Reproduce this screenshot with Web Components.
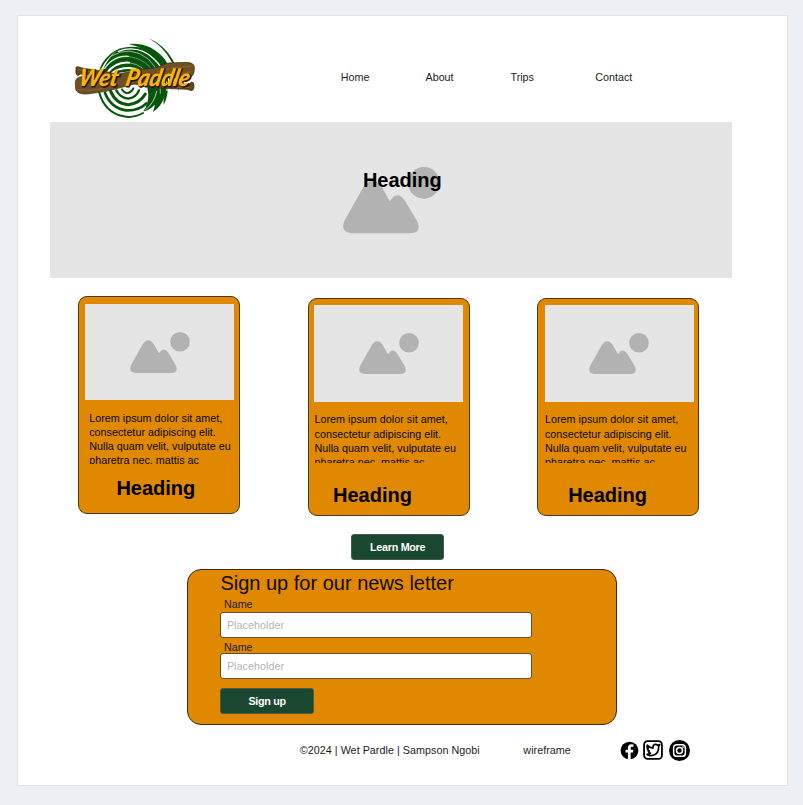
<!DOCTYPE html>
<html lang="en">
<head>
<meta charset="utf-8">
<title>Wet Paddle</title>
<style>
html,body{margin:0;padding:0}
body{background:#ecf0f5;font:10.75px/14px "Liberation Sans",Arial,sans-serif;color:#1c1c1c;height:805px;overflow:hidden}
</style>
</head>
<body>
<wp-page></wp-page>
<script>
const define = (name, markup) => {
  const t = document.createElement('template');
  t.innerHTML = markup;
  customElements.define(name, class extends HTMLElement {
    constructor() {
      super();
      this.attachShadow({mode: 'open'}).appendChild(t.content.cloneNode(true));
    }
  });
};

// crescent-shaped ripple: two arcs of different radius sharing their end points
const ripple = (x1, y1, x2, y2, r1, r2) =>
  `<path d="M${x1} ${y1}A${r1} ${r1} 0 0 1 ${x2} ${y2}A${r2} ${r2} 0 0 0 ${x1} ${y1}Z"/>`;

define('wp-logo', `
<style>:host{display:block;width:140px;height:90px}svg{display:block}</style>
<svg width="140" height="90" viewBox="0 0 420 270" role="img">
 <path fill="#07550b" d="M163 57Q215 40 258 68Q302 99 309 150Q311 200 296 225Q294 213 298 203Q286 232 264 246L270 224Q249 243 235 244Q250 221 250 194L240 118L150 130Q121 132 106 150Q114 94 163 57Z"/>
 <g fill="#07550b">
  ${ripple(250, 24, 340, 189, 150, 176)}
  ${ripple(191, 42, 321, 180, 118, 165)}
  ${ripple(98, 142, 176, 52, 105, 150)}
 </g>
 <g fill="none" stroke="#fff" stroke-linecap="round">
  <path stroke-width="4" d="M160 64Q220 42 267 87Q306 124 306 181"/>
  <path stroke-width="3" opacity=".55" d="M140 78Q195 44 250 87Q291 126 286 190"/>
  <path stroke-width="4" opacity=".85" d="M110 131Q137 76 190 79"/>
  <path stroke-width="3" opacity=".35" d="M190 79Q255 88 270 140"/>
  <path stroke-width="6" d="M124 131Q150 95 192 98"/>
  <path stroke-width="3" opacity=".5" d="M192 98Q241 105 253 145"/>
  <path stroke-width="6" d="M141 129Q173 108 211 117"/>
  <path stroke-width="3" opacity=".7" d="M275 184Q268 219 241 240"/>
 </g>
 <g fill="none" stroke="#07550b" stroke-linecap="round">
  <path stroke-width="6" d="M102 185Q119 248 176 259Q206 265 234 249"/>
  <path stroke-width="8" d="M120 189Q139 235 183 241Q221 243 244 220"/>
  <path stroke-width="9" d="M137 184Q153 222 190 224Q225 220 241 192"/>
  <path stroke-width="7" d="M154 181Q165 204 190 206Q214 202 222 181"/>
  <path stroke-width="6" d="M171 178Q177 190 190 189Q202 185 205 175"/>
 </g>
 <g stroke="#37240c" stroke-width="2">
  <path fill="#664519" d="M33 117Q30 110 39 110L51 114L130 126L250 158L366 166L380 156Q388 157 387 168Q387 182 379 182L366 178L270 174L120 144L47 132L38 137Q31 134 33 117Z"/>
  <path fill="#705022" d="M31 158Q31 143 48 140L112 142L230 118L270 114L310 99L366 97Q388 98 388 113Q389 139 372 143L310 143L247 152L124 184L66 192Q35 193 32 177Z"/>
 </g>
 <g fill="none" stroke="#9a7436" stroke-width="2" opacity=".8"><path d="M38 179L78 181L116 174M277 125L324 113L378 109M289 134L342 133L379 125M40 119L88 127M335 172L379 173"/></g>
 <g font-family="Lato,sans-serif" font-style="italic" font-weight="900" font-size="72" transform="translate(0 169) skewX(-12)">
  <g fill="#251504" stroke="#251504" stroke-width="3"><text x="42" y="3" textLength="118" lengthAdjust="spacingAndGlyphs">Wet</text><text x="182" y="3" textLength="192" lengthAdjust="spacingAndGlyphs">Paddle</text></g>
  <g fill="#f9b40c" aria-hidden="true"><text x="38" y="-1" textLength="118" lengthAdjust="spacingAndGlyphs">Wet</text><text x="178" y="-1" textLength="192" lengthAdjust="spacingAndGlyphs">Paddle</text></g>
 </g>
</svg>`);

define('wp-nav', `
<style>:host{display:grid;grid-template-columns:84.7px 85px 84.8px auto;white-space:nowrap}</style>
<slot></slot>`);

define('wp-picture', `
<style>:host{display:flex;background:#e5e5e5;align-items:center;justify-content:center}svg{display:block;width:var(--art,60px);overflow:visible}</style>
<svg viewBox="0 0 60 41" fill="#b2b2b2"><circle cx="50" cy="9.8" r="9.8"/><path d="M.9 33.3L12.6 12.4Q18.3 4.2 24 12.4L29 21.3Q33.4 13.8 38.3 20.8L46 33.7Q48.8 41 41.3 41H5.6Q-2 40.4 .9 33.3Z"/></svg>`);

define('wp-hero', `
<style>:host{display:grid;width:681.5px;height:155.5px}wp-picture,h1{grid-area:1/1}wp-picture{--art:97px}
h1{margin:45.5px 0 0 312.5px;font-size:20px;line-height:24px;color:#000;z-index:1}</style>
<wp-picture></wp-picture><h1><slot></slot></h1>`);

define('wp-card', `
<style>
:host{display:block;box-sizing:border-box;width:162px;height:218px;border:1px solid #4c3820;border-radius:9px;background:#df8800;color:#080800;padding:6.5px 0 0 var(--pic,6px)}
wp-picture{width:149px;height:96.5px}
p{margin:var(--gap,10.5px) 0 0 var(--ind,3.8px);width:145px;height:var(--clip,53px);line-height:var(--lh,14px);overflow:hidden;white-space:nowrap;letter-spacing:.02px}
h2{margin:var(--hgap,12px) 0 0 var(--hx,31px);font-size:20px;line-height:24px;color:#000}
</style>
<wp-picture></wp-picture><p><slot></slot></p><h2><slot name="title"></slot></h2>`);

define('wp-button', `
<style>:host{display:block;width:93.5px}button{all:unset;box-sizing:border-box;display:block;width:100%;height:26px;border:1px solid #4b594e;border-radius:3px;background:#19472f;color:#fff;font-weight:bold;line-height:24px;text-align:center;letter-spacing:-.28px}</style>
<button><slot></slot></button>`);

define('wp-field', `
<style>:host{display:block}label{display:block;margin-left:3.5px;line-height:14px;color:#251b08}
div{box-sizing:border-box;width:311.5px;height:26px;margin-top:var(--fgap,1px);border:1px solid #665033;border-radius:3px;background:#fff;color:#b4b4b4;padding-left:5.5px;line-height:24px;letter-spacing:.05px}</style>
<label><slot></slot></label><div><slot name="hint"></slot></div>`);

define('wp-signup', `
<style>
:host{display:block;box-sizing:border-box;width:430px;height:156.5px;border:1px solid #3c2c16;border-radius:14px;background:#df8800;padding:1px 0 0 32.4px}
h2{margin:0 0 2px;font-weight:400;font-size:20px;line-height:24px;color:#100c00}
.first{--fgap:1px}.second{margin-top:2px;--fgap:-.5px}
wp-button{margin-top:9px}
</style>
<h2>Sign up for our news letter</h2>
<wp-field class="first">Name<span slot="hint">Placeholder</span></wp-field>
<wp-field class="second">Name<span slot="hint">Placeholder</span></wp-field>
<wp-button>Sign up</wp-button>`);

define('wp-social', `
<style>:host{display:flex;align-items:center;gap:4px}svg{display:block}</style>
<svg width="19" height="19" viewBox="0 0 24 24"><circle cx="12" cy="12" r="11.2"/><path fill="#fff" d="M10 23V14.5H7V11H10V8.4C10 5.5 11.7 4 14.4 4L17 4.3V7.3H15.4C13.9 7.3 13.5 8.2 13.5 9.1V11H16.9L16.3 14.5H13.5V23Z"/></svg>
<svg width="20" height="20" viewBox="0 0 24 24" fill="none" stroke="#000" stroke-width="2.2"><rect x="1.3" y="1.3" width="21.4" height="21.4" rx="4.2"/><path stroke-width="2" stroke-linejoin="round" d="M5 6.2Q8 9.6 12 9.7Q11.5 5.7 14.7 5.3Q16.1 5.1 17.4 6.3L20 5.5L18.7 8Q19 14.7 14.4 17.5Q9.6 20 4.8 17.3Q7.9 17.3 9 16Q6.4 14.9 6.2 13.2H7.6Q4.8 11.8 5 9.5L6.3 10Q4.1 7.8 5 6.2Z"/></svg>
<svg style="margin-left:2px" width="21" height="21" viewBox="0 0 24 24"><circle cx="12" cy="12" r="12"/><g fill="none" stroke="#fff" stroke-width="1.7"><rect x="5.3" y="5.3" width="13.4" height="13.4" rx="3.7"/><circle cx="12" cy="12" r="3.4"/></g><circle cx="16" cy="8" r="1" fill="#fff"/></svg>`);

define('wp-page', `
<style>
:host{display:block;box-sizing:border-box;width:771px;height:771px;margin:15px 0 0 16.5px;border:1px solid #dfe3e7;background:#fff;overflow:hidden}
header{display:flex;height:106px}
wp-logo{margin:14px 0 0 47px}
wp-nav{margin:54px 0 0 136.3px}
wp-hero{margin-left:32.9px}
.cards{display:flex;height:218px;margin:18.9px 0 0 60.9px;gap:67.6px;align-items:flex-start}
.b,.c{margin-top:1.5px;--clip:51px;--gap:10.3px;--ind:0px;--hgap:20px;--lh:14.4px}
.b{--pic:5.5px;--hx:18.5px}.c{margin-left:-.3px;--pic:6.7px;--hx:23.2px}
.learn{margin:19.5px 0 0 333.4px}
wp-signup{margin:9px 0 0 169.5px}
footer{display:flex;align-items:center;height:22px;margin:14px 0 0 282.3px;white-space:nowrap;letter-spacing:.03px}
.wf{margin-left:43.7px}wp-social{margin-left:49px}
</style>
<header><wp-logo></wp-logo><wp-nav><span>Home</span><span>About</span><span>Trips</span><span>Contact</span></wp-nav></header>
<wp-hero>Heading</wp-hero>
<section class="cards">
<wp-card>Lorem ipsum dolor sit amet,<br>consectetur adipiscing elit.<br>Nulla quam velit, vulputate eu<br>pharetra nec, mattis ac<span slot="title">Heading</span></wp-card>
<wp-card class="b">Lorem ipsum dolor sit amet,<br>consectetur adipiscing elit.<br>Nulla quam velit, vulputate eu<br>pharetra nec, mattis ac<span slot="title">Heading</span></wp-card>
<wp-card class="c">Lorem ipsum dolor sit amet,<br>consectetur adipiscing elit.<br>Nulla quam velit, vulputate eu<br>pharetra nec, mattis ac<span slot="title">Heading</span></wp-card>
</section>
<wp-button class="learn">Learn More</wp-button>
<wp-signup></wp-signup>
<footer><span>©2024 | Wet Pardle | Sampson Ngobi</span><span class="wf">wireframe</span><wp-social></wp-social></footer>`);
</script>
</body>
</html>
